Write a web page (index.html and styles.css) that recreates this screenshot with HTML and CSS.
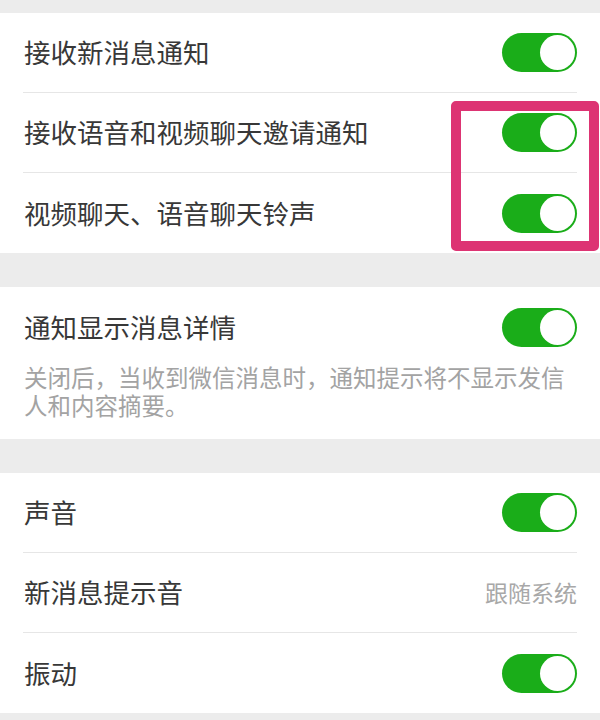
FILE: index.html
```html
<!DOCTYPE html>
<html lang="zh-CN">
<head>
<meta charset="utf-8">
<title>新消息通知</title>
<link rel="stylesheet" href="styles.css">
</head>
<body>
<div class="page">
  <section class="group">
    <div class="row"><span class="label">接收新消息通知</span><span class="toggle"><span class="knob"></span></span></div>
    <div class="row"><span class="label">接收语音和视频聊天邀请通知</span><span class="toggle"><span class="knob"></span></span></div>
    <div class="row"><span class="label">视频聊天、语音聊天铃声</span><span class="toggle"><span class="knob"></span></span></div>
  </section>
  <div class="gap"></div>
  <section class="group group-desc">
    <div class="row row-plain"><span class="label">通知显示消息详情</span><span class="toggle"><span class="knob"></span></span></div>
    <p class="desc">关闭后，当收到微信消息时，通知提示将不显示发信人和内容摘要。</p>
  </section>
  <div class="gap"></div>
  <section class="group">
    <div class="row"><span class="label">声音</span><span class="toggle"><span class="knob"></span></span></div>
    <div class="row"><span class="label">新消息提示音</span><span class="value">跟随系统</span></div>
    <div class="row"><span class="label">振动</span><span class="toggle"><span class="knob"></span></span></div>
  </section>
  <div class="highlight"></div>
</div>
</body>
</html>
```
FILE: styles.css
```css
html, body {
  margin: 0;
  padding: 0;
  background: #ececec;
}
body {
  font-family: "Noto Sans CJK SC", "Noto Sans", sans-serif;
  color: #383838;
}
.page {
  position: relative;
  padding-top: 13px;
  display: flex;
  flex-direction: column;
}
.group {
  background: #ffffff;
  padding: 0 23px;
  display: flex;
  flex-direction: column;
}
.gap {
  height: 34px;
}
.row {
  height: 80px;
  box-sizing: border-box;
  border-bottom: 1px solid #e6e6e6;
  display: flex;
  align-items: center;
  justify-content: space-between;
}
.row:last-child,
.row-plain {
  border-bottom: none;
}
.label {
  font-size: 26.5px;
  line-height: 1;
  padding-left: 1px;
}
.value {
  font-size: 23px;
  line-height: 1;
  color: #a8a8a8;
}
.group-desc {
  padding-bottom: 20px;
}
.desc {
  margin: -4px 0 0 0;
  padding-left: 1px;
  font-size: 23.5px;
  line-height: 28px;
  color: #a3a3a3;
}
.toggle {
  width: 75px;
  height: 39px;
  box-sizing: border-box;
  padding: 2px;
  border-radius: 20px;
  background: #1aad19;
  display: flex;
  justify-content: flex-end;
  align-items: center;
}
.knob {
  width: 35px;
  height: 35px;
  border-radius: 50%;
  background: #ffffff;
}
.highlight {
  position: absolute;
  left: 451px;
  top: 101px;
  width: 148px;
  height: 150px;
  box-sizing: border-box;
  border: 10px solid #dd3473;
  border-radius: 5px;
}
```
